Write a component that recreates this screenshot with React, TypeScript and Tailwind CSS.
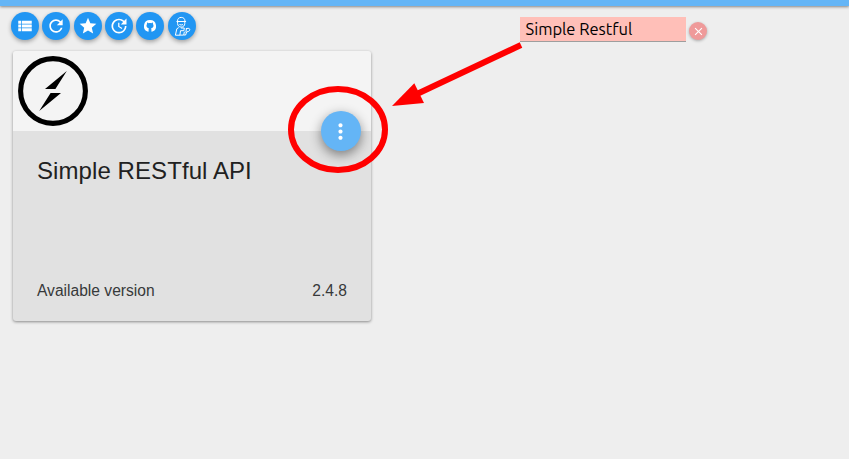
import React from "react";
import { MdRefresh, MdStar, MdUpdate, MdMoreVert, MdClose } from "react-icons/md";

function ListIcon() {
  return (
    <svg viewBox="0 0 24 24" className="size-[18px]" fill="currentColor">
      <path d="M3 14h4v-4H3v4zm0 5h4v-4H3v4zM3 9h4V5H3v4zm5 5h13v-4H8v4zm0 5h13v-4H8v4zM8 5v4h13V5H8z" />
    </svg>
  );
}

function GithubIcon() {
  return (
    <svg viewBox="0 0 12 12" className="size-3" fill="currentColor">
      <path d="M6 0a6 6 0 0 0-1.9 11.7c.3.05.5-.1.5-.35V9.6c0-.6.1-.9.4-1.2-1.4-.2-2.5-.9-2.5-2.8 0-.6.2-1.1.6-1.5-.15-.5-.1-1 .1-1.5.6 0 1.1.3 1.5.6.8-.2 1.8-.2 2.6 0 .4-.3.9-.6 1.5-.6.2.5.25 1 .1 1.5.4.4.6.9.6 1.5 0 1.9-1.1 2.6-2.5 2.8.3.3.4.7.4 1.2v1.75c0 .25.2.4.5.35A6 6 0 0 0 6 0Z" />
    </svg>
  );
}

function ExpertIcon() {
  return (
    <svg viewBox="0 0 28 28" className="size-7" fill="none" stroke="currentColor" strokeWidth="1" strokeLinejoin="round" strokeLinecap="round">
      <path d="M9.5 9C9.5 6.6 11 5.4 13.2 5.4S17 6.6 17 9M8.9 9.5h8.8" />
      <path d="M9.6 10v1.6c0 2 1.6 3.5 3.6 3.5s3.6-1.5 3.6-3.5V10M11.8 12.7q1.4.8 2.8 0" />
      <path d="M10.4 15.8 8.8 16.8 7.4 23.2h4.2M13.3 16h3l-.4 2.7h-3.4l-.6 4.4h3.8l.6-3M18.2 16.6l2-.3c2 0 2.1 2.4.3 3.1l-1.9.6-1 3h-1.3M18.4 17l-.5 3" />
    </svg>
  );
}

const tools = [
  { name: "View", icon: <ListIcon /> },
  { name: "Refresh", icon: <MdRefresh size={20} /> },
  { name: "Favorites", icon: <MdStar size={20} /> },
  { name: "Updates", icon: <MdUpdate size={20} /> },
  { name: "GitHub", icon: <GithubIcon /> },
  { name: "Expert", icon: <ExpertIcon /> },
];

function Logo() {
  return (
    <svg viewBox="0 0 70 70" className="size-[70px]">
      <circle cx="35" cy="35" r="32.4" fill="none" stroke="#000" strokeWidth="5.1" />
      <path d="M48.8 15 27 33h10.4ZM32.6 37H43L21.2 55Z" />
    </svg>
  );
}

export default function App() {
  return (
    <div className="relative h-[459px] w-full overflow-hidden bg-[#eeeeee] font-['Liberation_Sans',Arial,sans-serif]">
      <div className="h-1.5 bg-[#64b5f6] shadow-[0_1px_3px_rgba(0,0,0,0.45)]" />
      <header className="flex h-[45px] items-start pl-[11px] pt-1.5">
        <div className="flex w-[185px] gap-[3.3px]">
          {tools.map((tool) => (
            <button key={tool.name} aria-label={tool.name} className="flex size-7 shrink-0 items-center justify-center rounded-full bg-[#2196f3] text-white shadow-[0_2px_4px_rgba(0,0,0,0.32)] last:ml-[0.5px]">
              {tool.icon}
            </button>
          ))}
        </div>
        <div className="ml-[324px] mt-[5px] flex items-start gap-[3px]">
          <div className="h-[25px] w-[166px] whitespace-nowrap border-b border-[#9e9e9e] bg-[#ffbfb8] pl-[5.5px] font-['Ubuntu','Noto_Sans',sans-serif] text-[16.5px] leading-[25px] text-black">
            Simple Restful
          </div>
          <button aria-label="Clear" className="mt-[5px] flex size-[18px] items-center justify-center rounded-full bg-[#ef9a9a] text-white shadow-[0_1px_3px_rgba(0,0,0,0.3)]">
            <MdClose size={13} />
          </button>
        </div>
      </header>

      <section className="relative ml-[13px] flex h-[270px] w-[358px] flex-col rounded-[3px] bg-[#e1e1e1] shadow-[0_1px_3px_rgba(0,0,0,0.42)]">
        <div className="h-20 rounded-t-[3px] bg-[#f4f4f4] pl-[5px] pt-[5px]">
          <Logo />
        </div>
        <div className="flex flex-1 flex-col justify-between px-6 pb-[18px] pt-6">
          <h1 className="text-[24px] leading-8 tracking-[0.08px] text-[#212121]">Simple RESTful API</h1>
          <div className="flex justify-between text-[15.6px] leading-6 text-[#37393a]">
            <span>Available version</span>
            <span>2.4.8</span>
          </div>
        </div>
        <button aria-label="More" className="absolute right-2.5 top-[60px] flex size-10 items-center justify-center rounded-full bg-[#64b5f6] pr-px text-white shadow-[0_4px_12px_rgba(0,0,0,0.45)]">
          <MdMoreVert size={25} />
        </button>
      </section>

      <svg className="pointer-events-none absolute left-0 top-0" width="849" height="459">
        <ellipse cx="338" cy="129.5" rx="47" ry="40.5" fill="none" stroke="#f00" strokeWidth="6" />
        <path d="M521 45 418 93.5" stroke="#f00" strokeWidth="6" />
        <path d="M392 106 414.3 83.2 424 103Z" fill="#f00" />
      </svg>
    </div>
  );
}
